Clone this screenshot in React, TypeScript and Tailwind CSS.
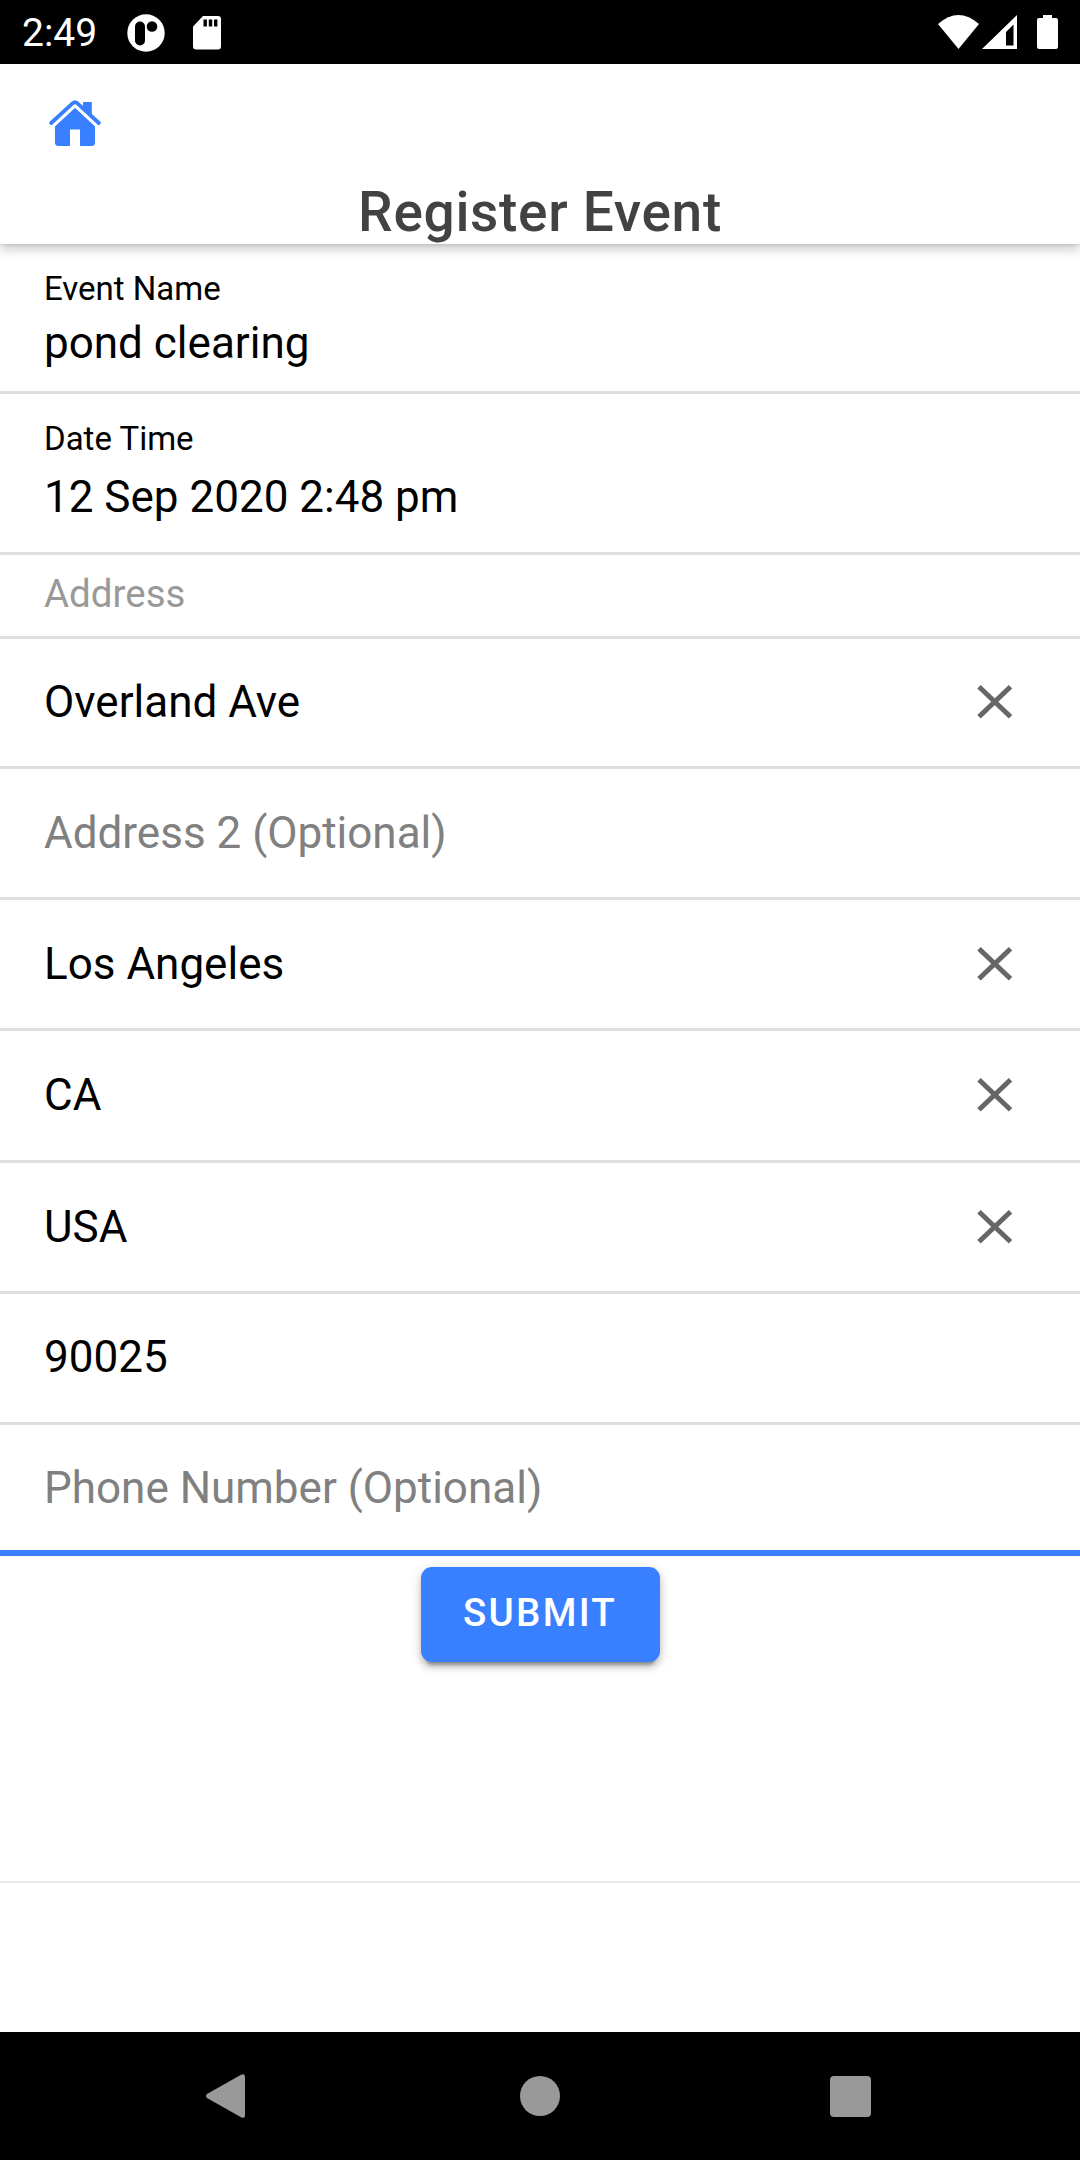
type RowProps = { text: string; muted?: boolean; clear?: boolean; focused?: boolean; height: string };

function ClearIcon() {
  return (
    <svg className="mr-[67px] h-[34px] w-[36px]" viewBox="0 0 36 34" fill="none" stroke="#666666" strokeWidth="5">
      <path d="M2 1.8 33.500 31.700M33.500 1.800 2 31.700" />
    </svg>
  );
}

function Row({ text, muted, clear, focused, height }: RowProps) {
  return (
    <div
      className={`flex items-center justify-between pl-[44px] ${height} ${
        focused ? "border-b-[6px] border-[#3880ff]" : "border-b-[3px] border-[#dedede]"
      }`}
    >
      <span className={`text-[44px] leading-[52px] ${muted ? "text-[#808080]" : "text-black"}`}>{text}</span>
      {clear && <ClearIcon />}
    </div>
  );
}

function StatusBar() {
  return (
    <div className="flex h-[64px] shrink-0 items-center bg-black text-white">
      <span className="ml-[22px] w-[104px] pt-[2px] text-[39px] leading-[64px]">2:49</span>
      <svg className="ml-[1px] mt-[1px] h-[38px] w-[38px]" viewBox="0 0 38 38">
        <circle cx="19" cy="19" r="18.7" fill="#fff" />
        <rect x="8" y="7.5" width="10" height="24" rx="5" fill="#000" />
        <circle cx="25" cy="12.5" r="5.3" fill="#000" />
      </svg>
      <svg className="ml-[28px] mt-[1px] h-[34px] w-[28px]" viewBox="0 0 28 34">
        <path d="M10 0H25q3 0 3 3v27.500q0 3-3 3H3q-3 0-3-3V10.500z" fill="#fff" />
        <path d="M10.500 3.500h3.400v7h-3.400zM15.800 3.500h3.400v7h-3.400zM21 3.500h3.400v7H21z" fill="#000" />
      </svg>
      <div className="ml-auto flex items-start">
        <svg className="h-[34px] w-[41px]" viewBox="0 0 41 34">
          <path d="M0 9Q20.500-9 41 9L20.500 34z" fill="#fff" />
        </svg>
        <svg className="ml-[3px] h-[34px] w-[35px]" viewBox="0 0 35 34">
          <path fillRule="evenodd" d="M35 0v34H0zM31.500 9.500 24 17v13.500h7.500z" fill="#fff" />
        </svg>
        <svg className="ml-[20px] mr-[22px] h-[34px] w-[21px]" viewBox="0 0 21 34">
          <path d="M6 0h9v3h4q2 0 2 2v27q0 2-2 2H2q-2 0-2-2V5q0-2 2-2h4z" fill="#fff" />
        </svg>
      </div>
    </div>
  );
}

export default function App() {
  return (
    <div className="flex h-[2160px] w-[1080px] flex-col overflow-hidden bg-white font-['Roboto',sans-serif]">
      <StatusBar />
      <header className="relative h-[180px] shrink-0 bg-white shadow-[0_5px_11px_rgba(0,0,0,0.22),0_1px_3px_rgba(0,0,0,0.1)]">
        <svg className="ml-[49px] mt-[36px] h-[46px] w-[52px]" viewBox="0 0 52 46" fill="#3880ff">
          <path d="M26 7.500 46 26v16.500q0 3.500-3.500 3.500H31V29.500H21V46H9.500Q6 46 6 42.500V26z" />
          <path d="M2.500 23.500 23.500 4q2.500-2.200 5 0l21 19.500" fill="none" stroke="#fff" strokeWidth="9" />
          <path d="M34 2h8.800v16L34 10z" />
          <path d="M2.200 23 23.500 3.300q2.500-2.200 5 0L49.800 23" fill="none" stroke="#3880ff" strokeWidth="3.800" strokeLinecap="round" />
        </svg>
        <h1 className="mt-[33px] text-center text-[55px] font-medium leading-[66px] tracking-[0.0125em] text-[#424242]">
          Register Event
        </h1>
      </header>
      <main className="flex grow flex-col">
        <div className="flex h-[150px] flex-col border-b-[3px] border-[#dedede] pl-[44px] pt-[25px]">
          <label className="text-[33px] leading-[40px]">Event Name</label>
          <span className="mt-[8px] text-[44px] leading-[52px]">pond clearing</span>
        </div>
        <div className="flex h-[161px] flex-col border-b-[3px] border-[#dedede] pl-[44px] pt-[25px]">
          <label className="text-[33px] leading-[40px]">Date Time</label>
          <span className="mt-[12px] text-[44px] leading-[52px]">12 Sep 2020 2:48 pm</span>
        </div>
        <div className="flex h-[84px] items-center border-b-[3px] border-[#dedede] pb-[3px] pl-[44px] text-[38.5px] text-[#999999]">
          Address
        </div>
        <Row height="h-[130px] pb-[2px]" text="Overland Ave" clear />
        <Row height="h-[131px]" text="Address 2 (Optional)" muted />
        <Row height="h-[131px] pb-[1px]" text="Los Angeles" clear />
        <Row height="h-[132px] pb-[2px]" text="CA" clear />
        <Row height="h-[131px] pb-[1px]" text="USA" clear />
        <Row height="h-[131px] pb-[2px]" text="90025" />
        <Row height="h-[131px]" text="Phone Number (Optional)" muted focused />
        <button className="mt-[11px] h-[95px] w-[239px] self-center rounded-[11px] bg-[#3880ff] pb-[3px] text-[38.5px] font-medium tracking-[0.06em] text-white shadow-[0_8px_3px_-5px_rgba(0,0,0,0.25),0_5px_6px_rgba(0,0,0,0.18),0_3px_14px_rgba(0,0,0,0.14)]">
          SUBMIT
        </button>
        <div className="mt-auto h-[151px] border-t-[2px] border-[#e9e9e9]" />
      </main>
      <nav className="flex h-[128px] shrink-0 items-center bg-black">
        <svg className="ml-[206px] h-[44px] w-[39px]" viewBox="0 0 39 44" fill="#999">
          <path d="M1 20 35 .8q4-2 4 2v38.400q0 4-4 2L1 24q-2-2 0-4z" />
        </svg>
        <div className="ml-[275px] size-[40px] rounded-full bg-[#999]" />
        <div className="ml-[270px] size-[41px] rounded-[4px] bg-[#999]" />
      </nav>
    </div>
  );
}
